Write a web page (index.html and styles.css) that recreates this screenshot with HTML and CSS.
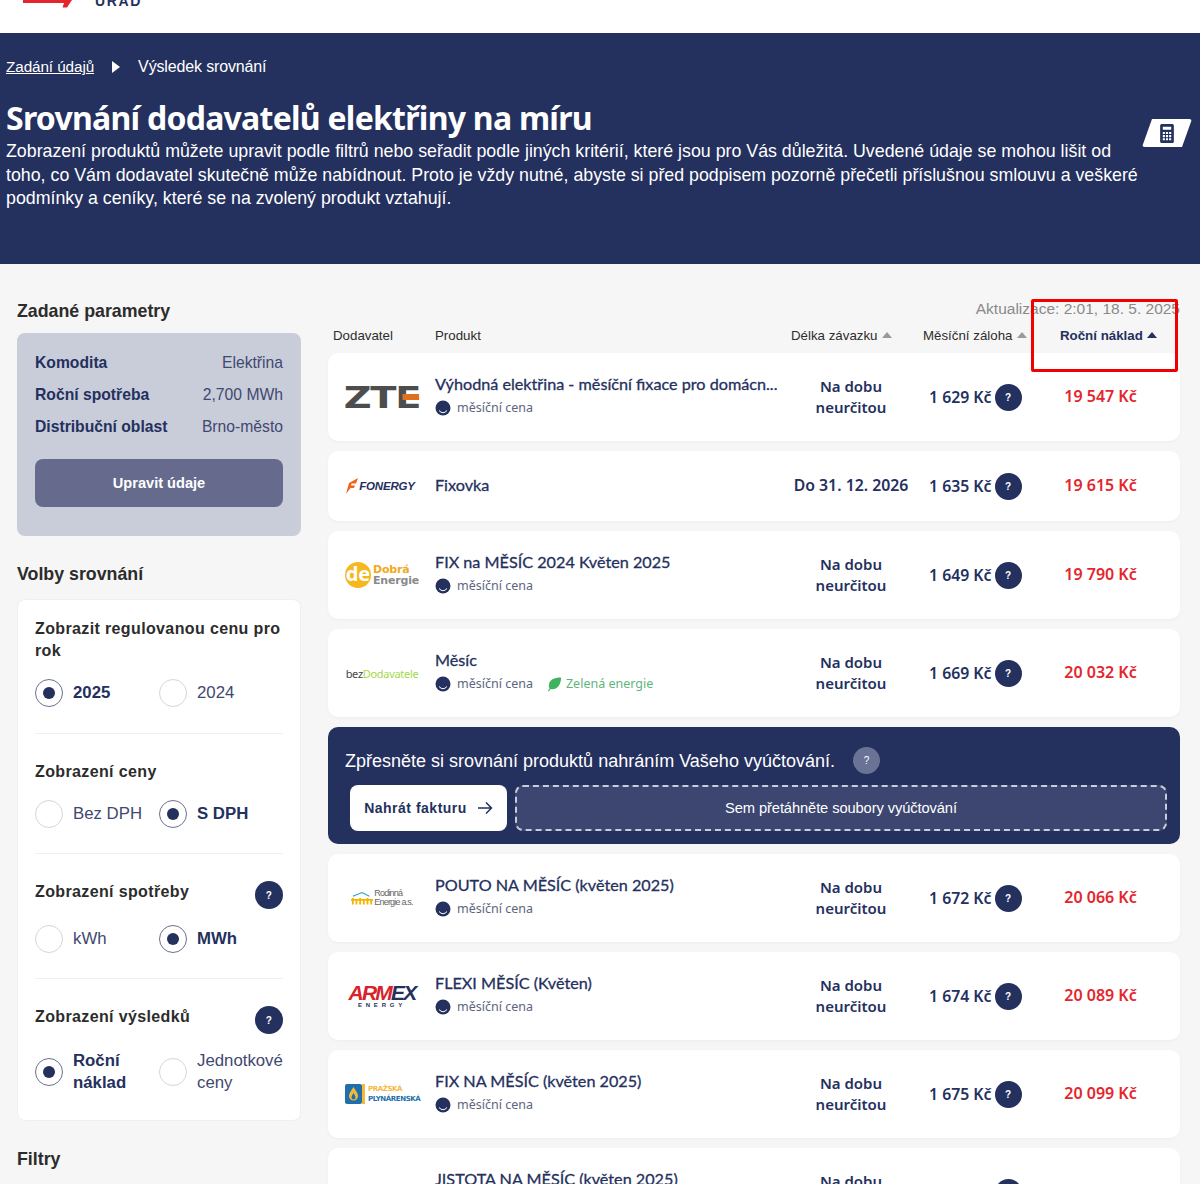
FILE: index.html
```html
<!DOCTYPE html>
<html lang="cs">
<head>
    <meta charset="UTF-8">
    <title>Srovnání dodavatelů elektřiny na míru</title>
    <link rel="stylesheet" href="styles.css">
</head>
<body>

    <!-- Top bar, scrolled so only the logo bottom shows -->
    <header class="topbar">
        <svg class="top-mark" width="52" height="8" viewBox="0 0 52 8"><path d="M1 0H50L45 7.500H40.500L42 3H1Z" fill="#e4262c"/></svg>
        <span class="top-word">ÚŘAD</span>
    </header>

    <section class="hero">
        <div class="crumbs">
            <a href="#">Zadání údajů</a>
            <span class="crumb-arrow"></span>
            <span>Výsledek srovnání</span>
        </div>
        <h1>Srovnání dodavatelů elektřiny na míru</h1>
        <p>Zobrazení produktů můžete upravit podle filtrů nebo seřadit podle jiných kritérií, které jsou pro Vás důležitá. Uvedené údaje se mohou lišit od toho, co Vám dodavatel skutečně může nabídnout. Proto je vždy nutné, abyste si před podpisem pozorně přečetli příslušnou smlouvu a veškeré podmínky a ceníky, které se na zvolený produkt vztahují.</p>
        <div class="calc-tab">
            <svg width="14" height="19" viewBox="0 0 13 18"><path fill-rule="evenodd" d="M1.5 0H11.5A1.5 1.5 0 0 1 13 1.5V16.5A1.5 1.5 0 0 1 11.500 18H1.500A1.500 1.500 0 0 1 0 16.500V1.500A1.500 1.500 0 0 1 1.500 0ZM2.500 2.500V5.500H10.500V2.500ZM2.500 7.500V9.500H4.500V7.500ZM5.500 7.500V9.500H7.500V7.500ZM8.500 7.500V9.500H10.500V7.500ZM2.500 10.500V12.500H4.500V10.500ZM5.500 10.500V12.500H7.500V10.500ZM8.500 10.500V12.500H10.500V10.500ZM2.500 13.500V15.500H4.500V13.500ZM5.500 13.500V15.500H7.500V13.500ZM8.500 13.500V15.500H10.500V13.500Z" fill="#24305e"/></svg>
        </div>
    </section>

    <main class="layout">
        <!-- Left column -->
        <aside class="side">
            <h2 class="side-title first">Zadané parametry</h2>
            <div class="params">
                <div class="param"><b>Komodita</b><span>Elektřina</span></div>
                <div class="param"><b>Roční spotřeba</b><span>2,700 MWh</span></div>
                <div class="param"><b>Distribuční oblast</b><span>Brno-město</span></div>
                <button class="edit-btn">Upravit údaje</button>
            </div>

            <h2 class="side-title">Volby srovnání</h2>
            <div class="options">
                <div class="opt-group">
                    <h3>Zobrazit regulovanou cenu pro rok</h3>
                    <div class="radios">
                        <div class="radio on"><i></i><span>2025</span></div>
                        <div class="radio"><i></i><span>2024</span></div>
                    </div>
                </div>
                <div class="opt-group">
                    <h3>Zobrazení ceny</h3>
                    <div class="radios">
                        <div class="radio"><i></i><span>Bez DPH</span></div>
                        <div class="radio on"><i></i><span>S DPH</span></div>
                    </div>
                </div>
                <div class="opt-group">
                    <h3 class="with-help">Zobrazení spotřeby <em class="help big">?</em></h3>
                    <div class="radios">
                        <div class="radio"><i></i><span>kWh</span></div>
                        <div class="radio on"><i></i><span>MWh</span></div>
                    </div>
                </div>
                <div class="opt-group">
                    <h3 class="with-help">Zobrazení výsledků <em class="help big">?</em></h3>
                    <div class="radios">
                        <div class="radio on"><i></i><span>Roční náklad</span></div>
                        <div class="radio"><i></i><span>Jednotkové ceny</span></div>
                    </div>
                </div>
            </div>

            <h2 class="side-title">Filtry</h2>
        </aside>

        <!-- Results -->
        <section class="results">
            <div class="updated">Aktualizace: 2:01, 18. 5. 2025</div>
            <div class="thead">
                <span>Dodavatel</span>
                <span>Produkt</span>
                <span class="th-term">Délka závazku <u></u></span>
                <span class="th-adv">Měsíční záloha <u></u></span>
                <span class="th-cost">Roční náklad <u></u></span>
            </div>
            <div class="red-mark"></div>

            <article class="row">
                <div class="logo logo-zte">ZT<span>E</span></div>
                <div class="prod">
                    <div class="prod-name">Výhodná elektřina - měsíční fixace pro domácn...</div>
                    <div class="tags"><span class="tag"><svg class="smile" viewBox="0 0 16 16"><circle cx="8" cy="8" r="7.500"/><path d="M4 10.500Q8 15 12 10.500"/></svg>měsíční cena</span></div>
                </div>
                <div class="term">Na dobu neurčitou</div>
                <div class="adv">1 629 Kč <em class="help">?</em></div>
                <div class="cost">19 547 Kč</div>
            </article>

            <article class="row short">
                <div class="logo logo-fon"><svg width="13" height="16" viewBox="0 0 13 16"><path d="M13 0L4 5 1 16 5.500 10H9L10 7.500H6L6.500 5.500H11Z" fill="#f0641e"/></svg>FONERGY</div>
                <div class="prod"><div class="prod-name">Fixovka</div></div>
                <div class="term date">Do 31. 12. 2026</div>
                <div class="adv">1 635 Kč <em class="help">?</em></div>
                <div class="cost">19 615 Kč</div>
            </article>

            <article class="row">
                <div class="logo logo-dob"><b>de</b><span><strong>Dobrá</strong>Energie</span></div>
                <div class="prod">
                    <div class="prod-name">FIX na MĚSÍC 2024 Květen 2025</div>
                    <div class="tags"><span class="tag"><svg class="smile" viewBox="0 0 16 16"><circle cx="8" cy="8" r="7.500"/><path d="M4 10.500Q8 15 12 10.500"/></svg>měsíční cena</span></div>
                </div>
                <div class="term">Na dobu neurčitou</div>
                <div class="adv">1 649 Kč <em class="help">?</em></div>
                <div class="cost">19 790 Kč</div>
            </article>

            <article class="row">
                <div class="logo logo-bez">bez<span>Dodavatele</span></div>
                <div class="prod">
                    <div class="prod-name">Měsíc</div>
                    <div class="tags">
                        <span class="tag"><svg class="smile" viewBox="0 0 16 16"><circle cx="8" cy="8" r="7.500"/><path d="M4 10.500Q8 15 12 10.500"/></svg>měsíční cena</span>
                        <span class="tag green"><svg class="leaf" viewBox="0 0 16 16"><path d="M15 1C8 1 2 3 2 10C2 11 2.300 12 2.800 12.500L1 15.500 2 16 3.800 13.300C10 15 15 9 15 1Z"/></svg>Zelená energie</span>
                    </div>
                </div>
                <div class="term">Na dobu neurčitou</div>
                <div class="adv">1 669 Kč <em class="help">?</em></div>
                <div class="cost">20 032 Kč</div>
            </article>

            <div class="upload">
                <div class="upload-title">Zpřesněte si srovnání produktů nahráním Vašeho vyúčtování. <em class="help pale">?</em></div>
                <div class="upload-row">
                    <button class="upload-btn">Nahrát fakturu
                        <svg width="16" height="14" viewBox="0 0 16 14"><path d="M1 7H14.500M9 1.500L14.500 7 9 12.500" fill="none" stroke="#24305e" stroke-width="1.500"/></svg>
                    </button>
                    <div class="drop">Sem přetáhněte soubory vyúčtování</div>
                </div>
            </div>

            <article class="row">
                <div class="logo logo-rod">
                    <svg width="22" height="15" viewBox="0 0 24 15"><path d="M2 5L12 1 20 5" fill="none" stroke="#2a9fc9" stroke-width="1.200"/><path d="M0 9H24M2 7V14M6 8V14M10 7V14M14 8V14M18 7V14M22 8V14" stroke="#f5b400" stroke-width="2"/></svg>
                    <span>Rodinná<br>Energie a.s.</span>
                </div>
                <div class="prod">
                    <div class="prod-name">POUTO NA MĚSÍC (květen 2025)</div>
                    <div class="tags"><span class="tag"><svg class="smile" viewBox="0 0 16 16"><circle cx="8" cy="8" r="7.500"/><path d="M4 10.500Q8 15 12 10.500"/></svg>měsíční cena</span></div>
                </div>
                <div class="term">Na dobu neurčitou</div>
                <div class="adv">1 672 Kč <em class="help">?</em></div>
                <div class="cost">20 066 Kč</div>
            </article>

            <article class="row">
                <div class="logo logo-arm"><div><b>ARM</b><span>EX</span></div><small>ENERGY</small></div>
                <div class="prod">
                    <div class="prod-name">FLEXI MĚSÍC (Květen)</div>
                    <div class="tags"><span class="tag"><svg class="smile" viewBox="0 0 16 16"><circle cx="8" cy="8" r="7.500"/><path d="M4 10.500Q8 15 12 10.500"/></svg>měsíční cena</span></div>
                </div>
                <div class="term">Na dobu neurčitou</div>
                <div class="adv">1 674 Kč <em class="help">?</em></div>
                <div class="cost">20 089 Kč</div>
            </article>

            <article class="row">
                <div class="logo logo-pp">
                    <svg width="17" height="20" viewBox="0 0 17 20"><rect width="17" height="20" rx="2" fill="#1f6fa8"/><path d="M8.500 3C11 7 13 9 13 12A4.500 4.500 0 0 1 4 12C4 9 6 7 8.500 3Z" fill="#f5b83d"/><path d="M8.500 9C9.500 11 10.500 12 10.500 13.500A2 2 0 0 1 6.500 13.500C6.500 12 7.500 11 8.500 9Z" fill="#1f6fa8"/></svg>
                    <i></i>
                    <span><strong>PRAŽSKÁ</strong>PLYNÁRENSKÁ</span>
                </div>
                <div class="prod">
                    <div class="prod-name">FIX NA MĚSÍC (květen 2025)</div>
                    <div class="tags"><span class="tag"><svg class="smile" viewBox="0 0 16 16"><circle cx="8" cy="8" r="7.500"/><path d="M4 10.500Q8 15 12 10.500"/></svg>měsíční cena</span></div>
                </div>
                <div class="term">Na dobu neurčitou</div>
                <div class="adv">1 675 Kč <em class="help">?</em></div>
                <div class="cost">20 099 Kč</div>
            </article>

            <article class="row">
                <div class="logo"></div>
                <div class="prod">
                    <div class="prod-name">JISTOTA NA MĚSÍC (květen 2025)</div>
                    <div class="tags"><span class="tag"><svg class="smile" viewBox="0 0 16 16"><circle cx="8" cy="8" r="7.500"/><path d="M4 10.500Q8 15 12 10.500"/></svg>měsíční cena</span></div>
                </div>
                <div class="term">Na dobu neurčitou</div>
                <div class="adv">1 679 Kč <em class="help">?</em></div>
                <div class="cost">20 150 Kč</div>
            </article>
        </section>
    </main>

</body>
</html>
```

FILE: styles.css
```css
/* General Styles */
html, body {
    height: 1184px;
    overflow: hidden;
}

body {
    margin: 0;
    font-family: 'Liberation Sans', Arial, sans-serif;
    background: #f6f6f6;
    color: #24305e;
}

/* Top bar */
.topbar {
    height: 33px;
    background: #fff;
    display: flex;
    align-items: flex-start;
    overflow: hidden;
}

.top-mark {
    margin-left: 22px;
    flex: none;
}

.top-word {
    margin: -6px 0 0 21px;
    font-size: 14px;
    line-height: 14px;
    font-weight: 700;
    letter-spacing: 1.6px;
    color: #24305e;
}

/* Hero */
.hero {
    position: relative;
    height: 231px;
    box-sizing: border-box;
    padding: 25px 6px 0;
    background: #24305e;
    color: #fff;
}

.crumbs {
    display: flex;
    align-items: center;
    font-size: 16px;
    line-height: 18px;
    letter-spacing: -0.15px;
}

.crumbs a {
    color: #fff;
    font-size: 15.300px;
    letter-spacing: -0.1px;
}

.crumb-arrow {
    width: 0;
    height: 0;
    margin: 0 18px;
    border-left: 8px solid #fff;
    border-top: 6px solid transparent;
    border-bottom: 6px solid transparent;
}

.hero h1 {
    margin: 19px 0 0;
    font-family: 'Noto Sans', sans-serif;
    font-size: 32px;
    line-height: 45px;
    font-weight: 700;
    letter-spacing: -0.74px;
}

.hero p {
    margin: 0;
    max-width: 1140px;
    font-size: 17.800px;
    line-height: 23.500px;
}

.calc-tab {
    position: absolute;
    top: 86px;
    left: 1142px;
    width: 50px;
    height: 28px;
    background: #fff;
    border-radius: 3px;
    clip-path: polygon(20% 0, 100% 0, 80% 100%, 0 100%);
    display: flex;
    align-items: center;
    justify-content: center;
}

/* Columns */
.layout {
    display: grid;
    grid-template-columns: 284px 852px;
    gap: 27px;
    padding: 0 20px 0 17px;
}

/* Left column */
.side-title {
    margin: 27px 0 15px;
    font-size: 17.800px;
    line-height: 22px;
    font-weight: 700;
    color: #2c2c2c;
}

.side-title.first {
    margin: 36px 0 11px;
}

.params {
    box-sizing: border-box;
    height: 203px;
    padding: 14px 18px 0;
    background: #c9cdd9;
    border-radius: 8px;
}

.param {
    display: flex;
    justify-content: space-between;
    font-size: 15.700px;
    line-height: 32px;
}

.param span {
    color: #3f4870;
}

.edit-btn {
    display: block;
    width: 100%;
    height: 48px;
    margin-top: 16px;
    border: none;
    border-radius: 8px;
    background: #666b8d;
    color: #fff;
    font: 700 14.600px 'Liberation Sans', Arial, sans-serif;
}

.options {
    box-sizing: border-box;
    height: 522px;
    margin-top: -1px;
    padding: 0 17px;
    background: #fff;
    border: 1px solid #efefef;
    border-radius: 8px;
}

.opt-group {
    box-sizing: border-box;
    height: 134px;
    padding-top: 18px;
    border-bottom: 1px solid #efefef;
}

.opt-group:nth-child(2) {
    height: 120px;
    padding-top: 27px;
}

.opt-group:nth-child(3) {
    height: 125px;
    padding-top: 27px;
}

.opt-group:nth-child(4) {
    padding-top: 27px;
    border-bottom: none;
}

.opt-group h3 {
    margin: 0;
    font-size: 16px;
    line-height: 22px;
    font-weight: 700;
    letter-spacing: 0.37px;
    color: #2c2c2c;
}

.opt-group h3.with-help {
    display: flex;
    justify-content: space-between;
    align-items: flex-start;
    height: 28px;
    margin-bottom: -1px;
}

.radios {
    display: grid;
    grid-template-columns: 124px 1fr;
    margin-top: 17px;
}

.radio {
    display: flex;
    align-items: center;
    gap: 10px;
    font-size: 16.800px;
    line-height: 22px;
    color: #3f4870;
}

.radio i {
    flex: none;
    width: 26px;
    height: 26px;
    border: 1px solid #d6d6d6;
    border-radius: 50%;
    background: #fff;
    position: relative;
}

.radio.on i {
    border-color: #6a7090;
}

.radio.on i::after {
    content: "";
    position: absolute;
    top: 7px;
    left: 7px;
    width: 12px;
    height: 12px;
    border-radius: 50%;
    background: #24305e;
}

.radio.on span {
    font-weight: 700;
    color: #24305e;
}

/* Help bubble */
.help {
    display: inline-flex;
    align-items: center;
    justify-content: center;
    width: 27px;
    height: 27px;
    flex: none;
    border-radius: 50%;
    background: #24305e;
    color: #fff;
    font: 700 10px 'Liberation Sans', Arial, sans-serif;
}

.help.big {
    width: 28px;
    height: 28px;
}

.help.pale {
    background: #6a7296;
    margin-left: 18px;
    font-weight: 400;
}

/* Results */
.results {
    position: relative;
}

.updated {
    margin-top: 36px;
    text-align: right;
    font-size: 15.500px;
    line-height: 18px;
    color: #8a8a8a;
}

.thead {
    display: grid;
    grid-template-columns: 102px 356px 132px 137px 1fr;
    align-items: center;
    height: 35px;
    box-sizing: border-box;
    padding-left: 5px;
    font-size: 13.300px;
    color: #2c2c2c;
}

.thead u {
    display: inline-block;
    width: 0;
    height: 0;
    margin-left: 1px;
    vertical-align: 2px;
    border-left: 5.500px solid transparent;
    border-right: 5.500px solid transparent;
    border-bottom: 6px solid #9a9a9a;
}

.th-cost {
    font-weight: 700;
    color: #24305e;
}

.th-cost u {
    border-bottom-color: #24305e;
}

.red-mark {
    position: absolute;
    top: 35px;
    left: 703px;
    width: 147px;
    height: 73px;
    box-sizing: border-box;
    border: 3px solid #f00000;
    border-radius: 2px;
}

/* Result rows */
.row {
    display: grid;
    grid-template-columns: 107px 343px 146px 105px 1fr;
    align-items: center;
    height: 88px;
    margin-bottom: 10px;
    background: #fff;
    border-radius: 10px;
    font-family: 'Noto Sans', sans-serif;
    box-shadow: 0 1px 3px rgba(0, 0, 0, 0.04);
}

.row.short {
    height: 70px;
}

.prod {
    min-width: 0;
    padding-bottom: 3px;
}

.prod-name {
    font-family: Lato, 'Noto Sans', sans-serif;
    font-size: 16.200px;
    line-height: 22px;
    -webkit-text-stroke: 0.3px #24305e;
    white-space: nowrap;
}

.tags {
    display: flex;
    gap: 14px;
    margin-top: 3px;
}

.tag {
    display: flex;
    align-items: center;
    gap: 6px;
    font-size: 12.500px;
    line-height: 20px;
    color: #5d6480;
}

.tag.green {
    gap: 4px;
    color: #5fb57c;
}

.smile {
    width: 16px;
    height: 16px;
}

.smile circle {
    fill: #24305e;
}

.smile path {
    fill: none;
    stroke: #fff;
    stroke-width: 1;
}

.leaf {
    width: 15px;
    height: 16px;
    fill: #3fb15f;
}

.term {
    padding: 0 12px 1px;
    text-align: center;
    font-size: 15px;
    line-height: 21px;
    font-weight: 600;
}

.term.date {
    padding: 0 0 1px;
    font-size: 15.800px;
    white-space: nowrap;
}

.adv {
    display: flex;
    align-items: center;
    gap: 3px;
    padding-left: 5px;
    font-size: 15.800px;
    font-weight: 600;
    white-space: nowrap;
}

.cost {
    padding: 0 8px 3px 0;
    text-align: center;
    font-size: 16px;
    font-weight: 600;
    color: #e4262c;
}

/* Logos */
.logo {
    display: flex;
    align-items: center;
    justify-content: center;
    width: 76px;
    margin-left: 16px;
    white-space: nowrap;
}

.logo svg {
    flex: none;
}

.logo-zte {
    font: 700 30px 'DejaVu Sans', sans-serif;
    letter-spacing: -1px;
    color: #4d4d4d;
    transform: scaleX(1.28);
}

.logo-zte span {
    position: relative;
}

.logo-zte span::after {
    content: "";
    position: absolute;
    top: 14px;
    left: 6px;
    width: 13px;
    height: 6px;
    background: #e0701e;
}

.logo-fon {
    gap: 1px;
    margin-left: 14px;
    font: italic 700 11.500px 'Liberation Sans', Arial, sans-serif;
    color: #24305e;
    letter-spacing: -0.2px;
}

.logo-dob {
    gap: 2px;
}

.logo-dob b {
    width: 26px;
    height: 26px;
    border-radius: 50%;
    background: #f7b81f;
    color: #fff;
    font: 700 20px/24px 'Noto Sans', sans-serif;
    text-align: center;
}

.logo-dob span {
    display: flex;
    flex-direction: column;
    font: 700 11px/11px 'DejaVu Sans', sans-serif;
    color: #8a8a8a;
    letter-spacing: -0.2px;
}

.logo-dob strong {
    color: #f2a81d;
}

.logo-bez {
    font: 400 11px 'Noto Sans', sans-serif;
    letter-spacing: -0.3px;
    color: #444;
}

.logo-bez span {
    color: #a6d94a;
}

.logo-rod {
    gap: 1px;
}

.logo-rod span {
    font: 400 9px/9px 'Liberation Sans', Arial, sans-serif;
    letter-spacing: -0.8px;
    color: #666;
}

.logo-arm {
    flex-direction: column;
    line-height: 1;
}

.logo-arm div {
    font: italic 700 21px/18px 'Liberation Sans', Arial, sans-serif;
    letter-spacing: -1.8px;
}

.logo-arm b {
    color: #d8232a;
}

.logo-arm span {
    color: #24305e;
}

.logo-arm small {
    font: 700 6px/7px 'Liberation Sans', Arial, sans-serif;
    letter-spacing: 3.800px;
    color: #24305e;
}

.logo-pp {
    justify-content: flex-start;
    margin-left: 17px;
}

.logo-pp i {
    flex: none;
    width: 3px;
    height: 20px;
    margin-right: 3px;
    background: #f5b83d;
}

.logo-pp span {
    display: flex;
    flex-direction: column;
    font: 700 7px/10px 'DejaVu Sans', sans-serif;
    color: #1f6fa8;
    letter-spacing: -0.4px;
}

.logo-pp strong {
    color: #f5b83d;
}

/* Upload banner */
.upload {
    box-sizing: border-box;
    height: 117px;
    margin-bottom: 10px;
    padding: 20px 13px 0 17px;
    background: #24305e;
    border-radius: 10px;
    color: #fff;
}

.upload-title {
    display: flex;
    align-items: center;
    font-size: 18px;
    line-height: 26px;
}

.upload-row {
    display: flex;
    gap: 8px;
    margin: 11px 0 0 5px;
}

.upload-btn {
    display: flex;
    align-items: center;
    justify-content: center;
    gap: 10px;
    width: 157px;
    height: 46px;
    padding: 0;
    border: none;
    border-radius: 8px;
    background: #fff;
    color: #24305e;
    font: 700 14px 'Liberation Sans', Arial, sans-serif;
    letter-spacing: 0.5px;
}

.drop {
    flex: 1;
    box-sizing: border-box;
    height: 46px;
    display: flex;
    align-items: center;
    justify-content: center;
    background: #3c4670;
    border: 2px dashed #c9cdd9;
    border-radius: 8px;
    font-size: 14.700px;
    letter-spacing: -0.1px;
}
```
